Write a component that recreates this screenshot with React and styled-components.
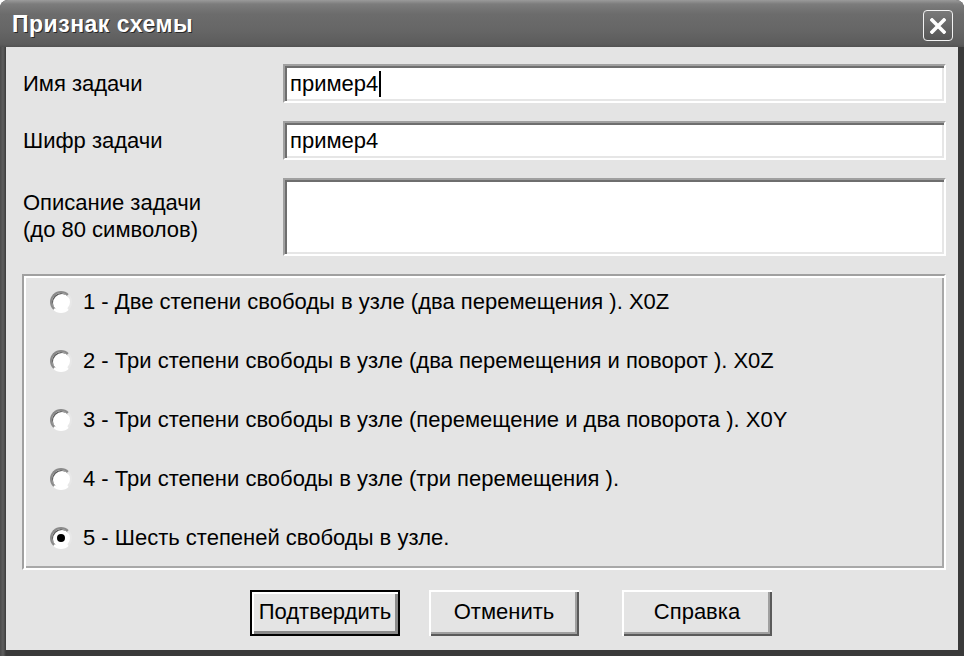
import React, { useState } from "react"
import styled, { createGlobalStyle } from "styled-components"

const GlobalStyle = createGlobalStyle`
  html, body {
    margin: 0;
    padding: 0;
    background: #ffffff;
  }
  body {
    font-family: "Liberation Sans", Arial, sans-serif;
  }
`

const Window = styled.div`
  width: 964px;
  height: 656px;
  box-sizing: border-box;
  display: flex;
  flex-direction: column;
  background: #3c3c3c;
  border-radius: 8px 8px 0 0;
  overflow: hidden;
`

const TitleBar = styled.div`
  height: 47px;
  flex: none;
  display: flex;
  align-items: center;
  justify-content: space-between;
  padding: 0 11px 0 12px;
  background: linear-gradient(
    to bottom,
    #9a9a9a 0px,
    #7c7c7c 4px,
    #6c6c6c 14px,
    #666666 30px,
    #5c5c5c 44px,
    #525252 47px
  );
`

const Title = styled.div`
  color: #ffffff;
  font-family: "Liberation Sans", Arial, sans-serif;
  font-weight: bold;
  font-size: 23px;
  letter-spacing: 0.5px;
  text-shadow: 1px 1px 0 #2a2a2a;
  margin-top: 2px;
`

const CloseButton = styled.div`
  width: 28px;
  height: 29px;
  border: 1.5px solid #f2f2f2;
  border-radius: 4px;
  background: linear-gradient(to bottom, #7a7a7a, #565656);
  display: flex;
  align-items: center;
  justify-content: center;
  margin-top: 4px;
`

const Frame = styled.div`
  flex: 1;
  display: flex;
  padding: 0 6px 6px 6px;
  background: linear-gradient(to right, #4a4a4a 0px, #5e5e5e 3px, #3a3a3a 6px);
`

const Body = styled.div`
  flex: 1;
  background: #e4e4e4;
  padding: 17px 12px 0 16px;
  display: flex;
  flex-direction: column;
  box-sizing: border-box;
  color: #000;
  font-size: 22px;
`

const FieldRow = styled.div`
  display: flex;
  align-items: ${p => (p.top ? "flex-start" : "center")};
  margin-bottom: 18px;
`

const Label = styled.div`
  width: 260px;
  flex: none;
  padding-left: 1px;
  line-height: 27px;
  padding-top: ${p => (p.top ? "11px" : "0")};
`

const Sunken = styled.div`
  flex: 1;
  height: ${p => p.h}px;
  box-sizing: border-box;
  background: #ffffff;
  border-top: 2px solid #a0a0a0;
  border-left: 2px solid #a0a0a0;
  border-right: 2px solid #ffffff;
  border-bottom: 2px solid #ffffff;
  box-shadow: inset 2px 2px 0 #6e6e6e, inset -2px -2px 0 #e6e6e6;
  padding: 0 5px;
  display: flex;
  align-items: ${p => (p.multi ? "flex-start" : "center")};
  font-size: 22px;
`

const Caret = styled.span`
  display: inline-block;
  width: 2px;
  height: 26px;
  background: #000;
  vertical-align: middle;
  margin-left: 1px;
`

const GroupBox = styled.div`
  height: 296px;
  box-sizing: border-box;
  border-top: 2px solid #a0a0a0;
  border-left: 2px solid #a0a0a0;
  border-right: 2px solid #ffffff;
  border-bottom: 2px solid #ffffff;
  box-shadow: inset 2px 2px 0 #ffffff, inset -2px -2px 0 #a8a8a8;
  padding: 14px 0 0 26px;
  display: flex;
  flex-direction: column;
  gap: 35px;
`

const RadioRow = styled.div`
  display: flex;
  align-items: center;
  height: 24px;
  gap: 11px;
`

const RadioCircle = styled.span`
  width: 22px;
  height: 22px;
  flex: none;
  box-sizing: border-box;
  border-radius: 50%;
  background: #ffffff;
  border: 2px solid;
  border-color: #8a8a8a #e8e8e8 #ffffff #8a8a8a;
  box-shadow: inset 1px 1px 0 #5a5a5a;
  display: flex;
  align-items: center;
  justify-content: center;
`

const Dot = styled.span`
  width: 8px;
  height: 8px;
  border-radius: 50%;
  background: #000;
`

const ButtonBar = styled.div`
  display: flex;
  justify-content: flex-start;
  padding-left: 228px;
  margin-top: 20px;
`

const Button = styled.div`
  width: ${p => p.w || 150}px;
  height: 46px;
  box-sizing: border-box;
  margin-right: ${p => p.mr || 0}px;
  background: #e4e4e4;
  border: ${p => (p.primary ? "2px solid #000" : "0")};
  box-shadow: ${p =>
    p.primary
      ? "inset 2px 2px 0 #ffffff, inset -3px -3px 0 #8a8a8a"
      : "inset 2px 2px 0 #ffffff, inset -2px -2px 0 #5a5a5a, inset -4px -4px 0 #a0a0a0"};
  display: flex;
  align-items: center;
  justify-content: center;
  font-size: 22px;
  padding-bottom: 2px;
`

const options = [
  "1 - Две степени свободы в узле (два перемещения ). X0Z",
  "2 - Три степени свободы в узле (два перемещения и поворот ). X0Z",
  "3 - Три степени свободы в узле (перемещение и два поворота ). X0Y",
  "4 - Три степени свободы в узле (три перемещения ).",
  "5 - Шесть степеней свободы в узле.",
]

const App = () => {
  const [selected, setSelected] = useState(4)

  return (
    <>
      <GlobalStyle />
      <Window>
        <TitleBar>
          <Title>Признак схемы</Title>
          <CloseButton>
            <svg width="16" height="16" viewBox="0 0 16 16">
              <path
                d="M2 2 L14 14 M14 2 L2 14"
                stroke="#ffffff"
                strokeWidth="3.6"
                strokeLinecap="square"
              />
            </svg>
          </CloseButton>
        </TitleBar>
        <Frame>
          <Body>
            <FieldRow>
              <Label>Имя задачи</Label>
              <Sunken h={39}>
                пример4
                <Caret />
              </Sunken>
            </FieldRow>
            <FieldRow>
              <Label>Шифр задачи</Label>
              <Sunken h={39}>пример4</Sunken>
            </FieldRow>
            <FieldRow top>
              <Label top>
                Описание задачи
                <br />
                (до 80 символов)
              </Label>
              <Sunken h={78} multi />
            </FieldRow>
            <GroupBox>
              {options.map((text, i) => (
                <RadioRow key={i} onClick={() => setSelected(i)}>
                  <RadioCircle>{selected === i && <Dot />}</RadioCircle>
                  {text}
                </RadioRow>
              ))}
            </GroupBox>
            <ButtonBar>
              <Button primary mr={29}>
                Подтвердить
              </Button>
              <Button mr={43}>Отменить</Button>
              <Button>Справка</Button>
            </ButtonBar>
          </Body>
        </Frame>
      </Window>
    </>
  )
}

export default App
